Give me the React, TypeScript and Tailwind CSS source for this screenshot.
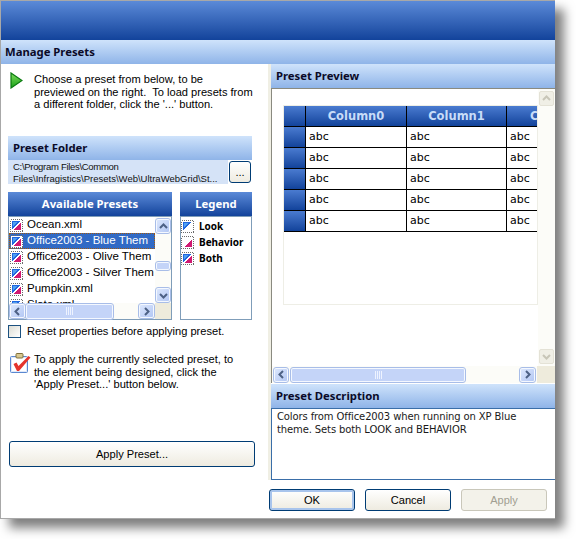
import React from "react";

const body = "font-['Liberation_Sans',sans-serif] text-[11.1px] text-black";
const bold = "font-['Noto_Sans',sans-serif] font-bold text-[11.3px]";

function PresetIcon({ look = true, behavior = true }: { look?: boolean; behavior?: boolean }) {
  return (
    <svg width="13" height="13" viewBox="0 0 13 13" className="shrink-0 block" shapeRendering="crispEdges">
      <rect x="0.5" y="0.5" width="12" height="12" fill="#fff" stroke="#6a6a6a" strokeDasharray="1 1" />
      {look && <path d="M2 2H10V3H9V4H8V5H7V6H6V7H5V8H4V9H3V10H2Z" fill="#1f66e0" />}
      {look && <path d="M3 3H7V4H6V5H5V6H4V7H3Z" fill="#4fa0f0" />}
      {behavior && <path d="M11 11H4V10H5V9H6V8H7V7H8V6H9V5H10V4H11Z" fill="#d01a72" />}
    </svg>
  );
}

function Chevron({ dir, color = "#4d6185" }: { dir: "up" | "down" | "left" | "right"; color?: string }) {
  const d = {
    up: "M2 7 L5.5 3.5 L9 7",
    down: "M2 4 L5.5 7.5 L9 4",
    left: "M7 2 L3.5 5.5 L7 9",
    right: "M4 2 L7.5 5.5 L4 9",
  }[dir];
  return (
    <svg width="11" height="11" viewBox="0 0 11 11" className="block">
      <path d={d} fill="none" stroke={color} strokeWidth="2" />
    </svg>
  );
}

function SBtn({ dir, disabled = false, className = "" }: { dir: "up" | "down" | "left" | "right"; disabled?: boolean; className?: string }) {
  return (
    <div
      className={`flex items-center justify-center rounded-[2px] border shrink-0 ${
        disabled
          ? "border-[#e4e2d6] bg-[#f0efe6]"
          : "border-[#f4f8ff] bg-gradient-to-br from-[#dbe6fc] to-[#b4c8f4] outline outline-[#a8bde8]"
      } ${className}`}
    >
      <Chevron dir={dir} color={disabled ? "#c8c6b8" : "#4d6185"} />
    </div>
  );
}

function Grip() {
  return (
    <div className="flex gap-px">
      {[0, 1, 2, 3].map((i) => (
        <div key={i} className="w-px h-2 bg-[#eef3ff]" />
      ))}
    </div>
  );
}

function Btn({ label, className = "" }: { label: string; className?: string }) {
  return (
    <div
      className={`flex items-center justify-center rounded-[3px] border border-[#003c74] bg-gradient-to-b from-white to-[#eeebe0] ${body} ${className}`}
    >
      {label}
    </div>
  );
}

const headerLight = "bg-gradient-to-b from-[#cfe3fb] to-[#8fb4e8]";
const headerDark = "bg-gradient-to-b from-[#5b8ad8] to-[#12439b]";

function PresetRow({ label, selected = false }: { label: string; selected?: boolean }) {
  return (
    <div
      className={`flex items-center h-4 pl-[1px] gap-[4px] whitespace-nowrap overflow-hidden shrink-0 ${
        selected ? "bg-[#316ac5] text-white outline-1 -outline-offset-1 outline-dotted outline-[#a05a10]" : ""
      }`}
    >
      <PresetIcon />
      <span>{label}</span>
    </div>
  );
}

function LegendRow({ label, look, behavior }: { label: string; look?: boolean; behavior?: boolean }) {
  return (
    <div className="flex items-center h-4 gap-[5px]">
      <PresetIcon look={look} behavior={behavior} />
      <span className="font-['Noto_Sans',sans-serif] font-bold text-[10px] text-black">{label}</span>
    </div>
  );
}

const rows = [0, 1, 2, 3, 4];

function GridRow() {
  return (
    <div className="flex h-[21px] font-['DejaVu_Sans',sans-serif] text-[11px] text-black border-b border-black">
      <div className="w-[21px] shrink-0 bg-gradient-to-b from-[#4a7bd0] to-[#12439b]" />
      <div className="w-[101px] shrink-0 border-l border-black pl-[3px] flex items-center">abc</div>
      <div className="w-[100px] shrink-0 border-l border-black pl-[3px] flex items-center">abc</div>
      <div className="w-[31px] shrink-0 border-l border-black pl-[3px] flex items-center">abc</div>
    </div>
  );
}

export default function App() {
  return (
    <div className="w-[576px] h-[539px] bg-white overflow-hidden">
      <div className="w-[555px] h-[519px] flex flex-col border border-[#a8a8a8] border-r-0 bg-white shadow-[9px_9px_10px_0px_rgba(0,0,0,0.5)]">
        <div className={`h-[39px] shrink-0 ${headerDark}`} />
        <div className={`h-[24px] shrink-0 flex items-center pl-1 ${headerLight} ${bold} text-[#0a0a28]`}>Manage Presets</div>
        <div className="flex h-[416px] shrink-0">
          {/* left */}
          <div className="w-[267px] shrink-0 flex flex-col pl-[7px]">
            <div className="h-[72px] shrink-0 flex pt-2 pl-[2px]">
              <svg width="13" height="17" viewBox="0 0 13 17" className="shrink-0 block">
                <defs>
                  <linearGradient id="arrowFill" x1="0" y1="0" x2="0" y2="1">
                    <stop offset="0" stopColor="#7fdc5c" />
                    <stop offset="1" stopColor="#18a018" />
                  </linearGradient>
                </defs>
                <path d="M1 1 L12 8.5 L1 16Z" fill="url(#arrowFill)" stroke="#0a7a10" strokeWidth="1.2" />
              </svg>
              <div className={`${body} ml-[11px] mt-px leading-[12.5px] w-[224px] whitespace-nowrap`}>
                Choose a preset from below, to be
                <br />
                previewed on the right.&nbsp; To load presets from
                <br />
                a different folder, click the '...' button.
              </div>
            </div>
            <div className={`w-[244px] h-6 shrink-0 flex items-center pl-[5px] ${headerLight} ${bold} text-[#0a0a28]`}>Preset Folder</div>
            <div className="w-[244px] h-6 shrink-0 flex">
              <div className="w-[220px] shrink-0 bg-[#d5e3f7] pl-[5px] pt-px font-['Liberation_Sans',sans-serif] text-[9.5px] leading-[12px] text-[#111] whitespace-nowrap overflow-hidden">
                <span className="tracking-[-0.3px]">C:\Program Files\Common</span>
                <br />
                Files\Infragistics\Presets\Web\UltraWebGrid\St...
              </div>
              <Btn label="..." className="ml-px w-[22px] h-[22px] mt-px" />
            </div>
            <div className="flex gap-2 mt-2 shrink-0">
              <div className="w-[164px]">
                <div className={`h-6 flex items-center justify-center text-white ${headerDark} ${bold}`}>Available Presets</div>
                <div className="h-[104px] border border-[#7f9db9] flex flex-col bg-white">
                  <div className="flex h-[86px]">
                    <div className="flex-1 min-w-0 overflow-hidden flex flex-col font-['Liberation_Sans',sans-serif] text-[11.5px] text-black">
                      <PresetRow label="Ocean.xml" />
                      <PresetRow label="Office2003 - Blue Them" selected />
                      <PresetRow label="Office2003 - Olive Them" />
                      <PresetRow label="Office2003 - Silver Them" />
                      <PresetRow label="Pumpkin.xml" />
                      <PresetRow label="Slate.xml" />
                    </div>
                    <div className="w-4 shrink-0 bg-[#fcfcf8] flex flex-col items-center pt-[2px] pb-[1px]">
                      <SBtn dir="up" className="w-[14px] h-[14px]" />
                      <div className="flex-1 min-h-0 w-full pt-[29px]">
                        <div className="h-2 w-[14px] mx-auto rounded-[2px] bg-[#c4d4f8] border border-[#f4f8ff] outline outline-[#a8bde8]" />
                      </div>
                      <SBtn dir="down" className="w-[14px] h-[14px]" />
                    </div>
                  </div>
                  <div className="flex-1 flex">
                    <div className="flex-1 flex items-center bg-[#fcfcf8] px-px">
                      <SBtn dir="left" className="w-[15px] h-[14px]" />
                      <div className="w-[87px] h-[15px] ml-px rounded-[2px] bg-[#c4d4f8] border border-[#f4f8ff] outline outline-[#a8bde8] flex items-center justify-center">
                        <Grip />
                      </div>
                      <div className="flex-1" />
                      <SBtn dir="right" className="w-[15px] h-[14px]" />
                    </div>
                    <div className="w-4 shrink-0 bg-[#eeebdc]" />
                  </div>
                </div>
              </div>
              <div className="w-[72px]">
                <div className={`h-6 flex items-center justify-center text-white ${headerDark} ${bold}`}>Legend</div>
                <div className="h-[104px] border border-[#7f9db9] bg-white flex flex-col pt-[1px]">
                  <LegendRow label="Look" look behavior={false} />
                  <LegendRow label="Behavior" look={false} behavior />
                  <LegendRow label="Both" />
                </div>
              </div>
            </div>
            <div className={`flex items-center mt-[5px] h-[13px] shrink-0 ${body}`}>
              <div className="w-[13px] h-[13px] border border-[#1c5180] bg-gradient-to-br from-[#dcdcd4] to-white shrink-0" />
              <span className="ml-[6px]">Reset properties before applying preset.</span>
            </div>
            <div className="flex mt-[15px] h-[38px] shrink-0 pl-[2px]">
              <svg width="21" height="20" viewBox="0 0 21 20" className="shrink-0 block">
                <rect x="0.5" y="3.5" width="17" height="16" rx="1" fill="#dfe9fa" stroke="#5a88d0" />
                <rect x="2" y="5" width="14" height="13" fill="#fff" />
                <rect x="6" y="0.5" width="7" height="4.5" rx="1" fill="#d8c890" stroke="#80703c" />
                <path d="M3.5 11 L6.5 9.5 L8.5 13 L18.5 3 L20.5 4.5 L9 18 L7 18Z" fill="#e5342c" />
              </svg>
              <div className={`${body} ml-[3px] leading-[12.5px] w-[226px] whitespace-nowrap`}>
                To apply the currently selected preset, to
                <br />
                the element being designed, click the
                <br />
                'Apply Preset...' button below.
              </div>
            </div>
            <Btn label="Apply Preset..." className="w-[246px] h-[26px] ml-px mt-[50px] shrink-0" />
          </div>
          {/* gutter */}
          <div className="w-[3px] shrink-0 bg-[#f0efe4]" />
          {/* right */}
          <div className="flex-1 min-w-0 flex flex-col">
            <div className={`h-6 shrink-0 flex items-center pl-[5px] ${headerLight} ${bold} text-[#0a0a28]`}>Preset Preview</div>
            <div className="h-[295px] shrink-0 flex flex-col border-l border-t border-l-[#8a8a80] border-t-[#8a8a80] bg-white">
              <div className="flex h-[277px]">
                <div className="flex-1 min-w-0 pl-[11px] pt-[16px]">
                  <div className="h-[200px] border border-[#eeeee6] overflow-hidden">
                    <div className="flex h-[21px] border-b border-black font-['DejaVu_Sans',sans-serif] font-bold text-[11.5px] text-[#c8dcf8]">
                      <div className="w-[21px] shrink-0 bg-gradient-to-b from-[#4a7bd0] to-[#12439b]" />
                      <div className="w-[101px] shrink-0 pt-px border-l border-black bg-gradient-to-b from-[#4a7bd0] to-[#12439b] flex items-center justify-center">Column0</div>
                      <div className="w-[100px] shrink-0 pt-px border-l border-black bg-gradient-to-b from-[#4a7bd0] to-[#12439b] flex items-center justify-center">Column1</div>
                      <div className="w-[31px] shrink-0 pt-px border-l border-black bg-gradient-to-b from-[#4a7bd0] to-[#12439b] flex items-center pl-[23px] overflow-hidden whitespace-nowrap">Column2</div>
                    </div>
                    <div className="bg-white">
                      {rows.map((r) => (
                        <GridRow key={r} />
                      ))}
                    </div>
                  </div>
                </div>
                <div className="w-[17px] shrink-0 bg-[#fcfcf8] flex flex-col pt-[2px] pb-[2px] items-center">
                  <SBtn dir="up" disabled className="w-[15px] h-[15px]" />
                  <div className="flex-1" />
                  <SBtn dir="down" disabled className="w-[15px] h-[15px]" />
                </div>
              </div>
              <div className="flex-1 flex">
                <div className="flex-1 flex items-center px-[2px] bg-[#fcfcf8]">
                  <SBtn dir="left" className="w-[14px] h-[14px]" />
                  <div className="w-[174px] h-[14px] ml-[3px] rounded-[2px] bg-[#c4d4f8] border border-[#f4f8ff] outline outline-[#a8bde8] flex items-center justify-center">
                    <Grip />
                  </div>
                  <div className="flex-1" />
                  <SBtn dir="right" className="w-[15px] h-[14px]" />
                </div>
                <div className="w-[18px] shrink-0 bg-[#eeebdc]" />
              </div>
            </div>
            <div className={`h-6 mt-px shrink-0 flex items-center pl-[5px] ${headerLight} ${bold} text-[#0a0a28]`}>Preset Description</div>
            <div className="flex-1 border border-[#3a6ea8] border-r-0 bg-white pl-[5px] pt-px font-['DejaVu_Sans',sans-serif] text-[10px] tracking-[-0.12px] leading-[13px] text-[#1a1a1a]">
              Colors from Office2003 when running on XP Blue
              <br />
              theme. Sets both LOOK and BEHAVIOR
            </div>
          </div>
        </div>
        <div className="flex justify-end gap-[10px] pt-[9px] pr-2">
          <Btn label="OK" className="w-[86px] h-[22px] shadow-[inset_0_0_0_2px_#a8c4ec]" />
          <Btn label="Cancel" className="w-[86px] h-[22px]" />
          <div className="w-[86px] h-[22px] flex items-center justify-center rounded-[3px] border border-[#c9c7ba] bg-[#f3f2ea] font-['Liberation_Sans',sans-serif] text-[11px] text-[#a19f92]">Apply</div>
        </div>
      </div>
    </div>
  );
}
